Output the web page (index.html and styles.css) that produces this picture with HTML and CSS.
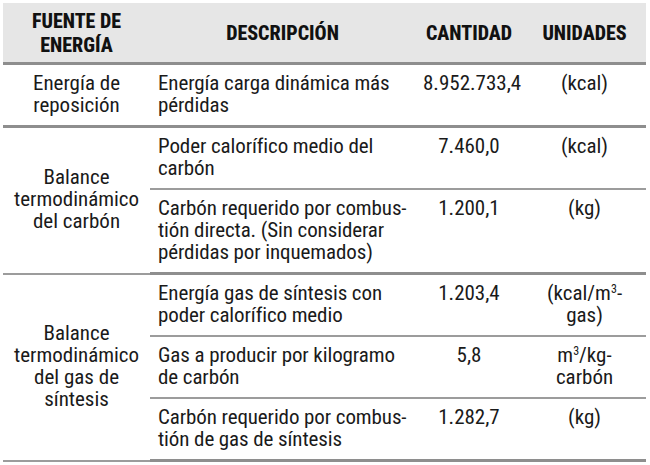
FILE: index.html
```html
<!DOCTYPE html>
<html lang="es">
<head>
<meta charset="utf-8">
<title>Balance energético</title>
<link rel="stylesheet" href="styles.css">
</head>
<body>
<table class="tbl">
  <colgroup>
    <col class="c1"><col class="c2"><col class="c3"><col class="c4">
  </colgroup>
  <thead>
    <tr>
      <th>FUENTE DE<br>ENERGÍA</th>
      <th>DESCRIPCIÓN</th>
      <th>CANTIDAD</th>
      <th>UNIDADES</th>
    </tr>
  </thead>
  <tbody>
    <tr class="last">
      <td class="src">Energía de<br>reposición</td>
      <td class="desc">Energía carga dinámica más<br>pérdidas</td>
      <td class="num">8.952.733,4</td>
      <td class="unit">(kcal)</td>
    </tr>
    <tr class="sub">
      <td class="src" rowspan="2">Balance<br>termodinámico<br>del carbón</td>
      <td class="desc">Poder calorífico medio del<br>carbón</td>
      <td class="num">7.460,0</td>
      <td class="unit">(kcal)</td>
    </tr>
    <tr class="last">
      <td class="desc">Carbón requerido por combus-<br>tión directa. (Sin considerar<br>pérdidas por inquemados)</td>
      <td class="num">1.200,1</td>
      <td class="unit">(kg)</td>
    </tr>
    <tr class="sub">
      <td class="src" rowspan="3">Balance<br>termodinámico<br>del gas de<br>síntesis</td>
      <td class="desc">Energía gas de síntesis con<br>poder calorífico medio</td>
      <td class="num">1.203,4</td>
      <td class="unit">(kcal/m<sup>3</sup>-<br>gas)</td>
    </tr>
    <tr class="sub">
      <td class="desc">Gas a producir por kilogramo<br>de carbón</td>
      <td class="num">5,8</td>
      <td class="unit">m<sup>3</sup>/kg-<br>carbón</td>
    </tr>
    <tr class="last">
      <td class="desc">Carbón requerido por combus-<br>tión de gas de síntesis</td>
      <td class="num">1.282,7</td>
      <td class="unit">(kg)</td>
    </tr>
  </tbody>
</table>
</body>
</html>
```
FILE: styles.css
```css
html, body {
  margin: 0;
  padding: 0;
  background: #ffffff;
}

body {
  padding: 3px 0 0 3px;
}

.tbl {
  width: 643px;
  border-collapse: collapse;
  table-layout: fixed;
  font-family: "Roboto", "Open Sans", sans-serif;
  font-stretch: 75%;
  font-size: 21px;
  line-height: 22px;
  color: #1a1a1a;
}

.c1 { width: 147px; }
.c2 { width: 265px; }
.c3 { width: 108px; }
.c4 { width: 123px; }

.tbl thead th {
  background: #e6e6e6;
  font-weight: 800;
  font-size: 20px;
  line-height: 24px;
  height: 59px;
  padding: 0 4px;
  text-align: center;
  vertical-align: middle;
  border-bottom: 3px solid #8e8e8e;
  color: #111111;
}

.tbl td {
  padding: 7px 8px 9px;
  vertical-align: top;
  white-space: nowrap;
}

.tbl td.src {
  text-align: center;
  vertical-align: middle;
  padding: 7px 4px 9px;
}

.tbl td.desc {
  text-align: left;
  padding-right: 2px;
  letter-spacing: -0.1px;
}

.tbl td.num,
.tbl td.unit {
  text-align: center;
}

.tbl tr.sub td {
  border-bottom: 2px solid #9c9c9c;
}

.tbl tr.last td,
.tbl td.src {
  border-bottom: 3px solid #8e8e8e;
}

.tbl sup {
  font-size: 12px;
  line-height: 0;
  vertical-align: 7px;
}
```
